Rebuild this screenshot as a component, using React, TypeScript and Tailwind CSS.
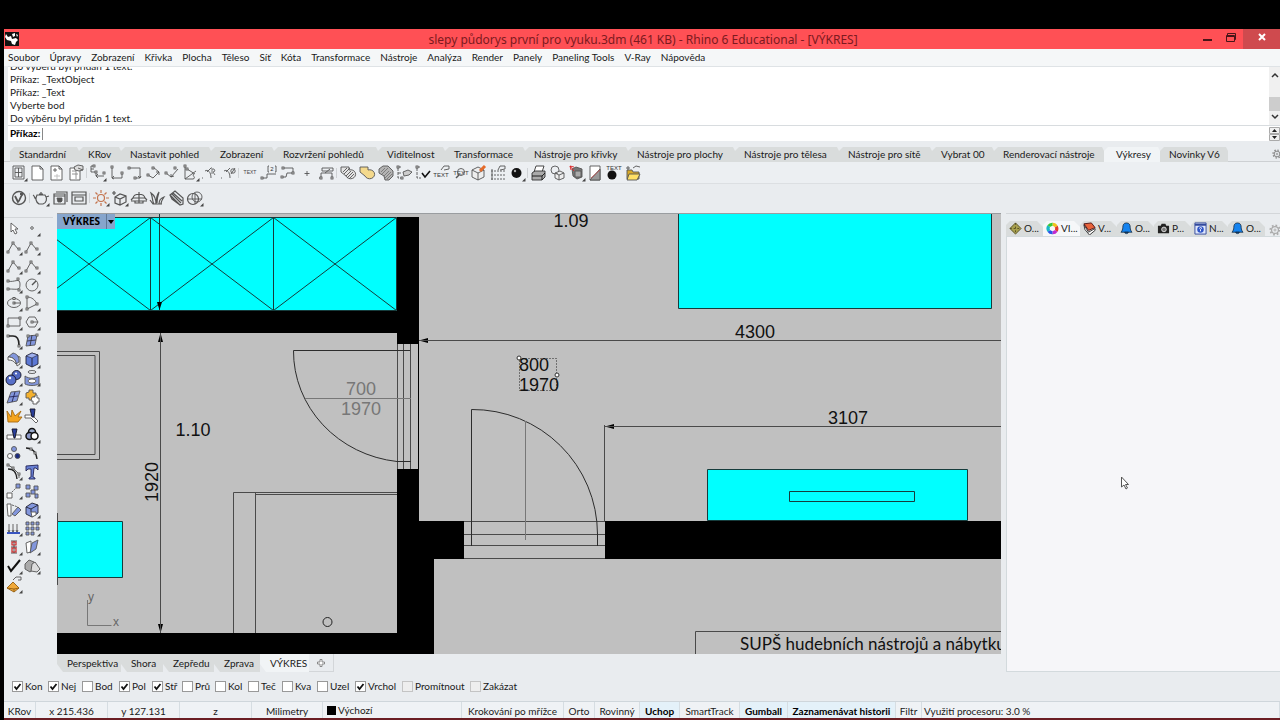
import { ReactNode } from "react";
import clsx from "clsx";

const menu = [
  "Soubor", "Úpravy", "Zobrazení", "Křivka", "Plocha", "Těleso", "Síť", "Kóta",
  "Transformace", "Nástroje", "Analýza", "Render", "Panely", "Paneling Tools",
  "V-Ray", "Nápověda",
];

const history = [
  "Do výběru byl přidán 1 text.",
  "Příkaz: _TextObject",
  "Příkaz: _Text",
  "Vyberte bod",
  "Do výběru byl přidán 1 text.",
];

const toolTabs = [
  { label: "Standardní", width: "w-[69px]" },
  { label: "KRov", width: "w-[42px]" },
  { label: "Nastavit pohled", width: "w-[90px]" },
  { label: "Zobrazení", width: "w-[63px]" },
  { label: "Rozvržení pohledů", width: "w-[104px]" },
  { label: "Viditelnost", width: "w-[67px]" },
  { label: "Transformace", width: "w-[80px]" },
  { label: "Nástroje pro křivky", width: "w-[103px]" },
  { label: "Nástroje pro plochy", width: "w-[107px]" },
  { label: "Nástroje pro tělesa", width: "w-[104px]" },
  { label: "Nástroje pro sítě", width: "w-[93px]" },
  { label: "Vybrat 00", width: "w-[62px]" },
  { label: "Renderovací nástroje", width: "w-[110px]" },
  { label: "Výkresy", width: "w-[56px]", active: true },
  { label: "Novinky V6", width: "w-[68px]" },
];

const viewTabs = [
  { label: "Perspektiva", width: "w-[64px]" },
  { label: "Shora", width: "w-[42px]" },
  { label: "Zepředu", width: "w-[51px]" },
  { label: "Zprava", width: "w-[46px]" },
  { label: "VÝKRES", width: "w-[49px]", active: true },
];

const snaps = [
  { label: "Kon", width: "w-[36px]", on: true },
  { label: "Nej", width: "w-[34px]", on: true },
  { label: "Bod", width: "w-[37px]" },
  { label: "Pol", width: "w-[33px]", on: true },
  { label: "Stř", width: "w-[30px]", on: true },
  { label: "Prů", width: "w-[33px]" },
  { label: "Kol", width: "w-[33px]" },
  { label: "Teč", width: "w-[34px]" },
  { label: "Kva", width: "w-[35px]" },
  { label: "Uzel", width: "w-[38px]" },
  { label: "Vrchol", width: "w-[47px]", on: true },
  { label: "Promítnout", width: "w-[68px]", off: true },
  { label: "Zakázat", width: "w-[56px]", off: true },
];

const statusCells = [
  { label: "Krokování po mřížce", width: "w-[102px]" },
  { label: "Orto", width: "w-[31px]" },
  { label: "Rovinný", width: "w-[45px]" },
  { label: "Uchop", width: "w-[40px]", on: true },
  { label: "SmartTrack", width: "w-[60px]" },
  { label: "Gumball", width: "w-[48px]", on: true },
  { label: "Zaznamenávat historii", width: "w-[108px]", on: true },
  { label: "Filtr", width: "w-[26px]" },
];

type Tool = { name: string; art: ReactNode; more?: boolean };

// small square control point used by most curve icons
const Pt = ({ x, y }: { x: number; y: number }) => (
  <rect x={x - 1} y={y - 1} width="2" height="2" fill="#fff" stroke="#444" strokeWidth="0.8" />
);

const hatch = "M4 8l4-4M5 10l6-6M7 12l5-5M8 14l6-6M10 15l5-5";
const blob = "M2 3h8v3a5 4.500 0 1 1-3 6L2 8z";

const dimGroups: { width: string; tools: Tool[] }[] = [
  {
    width: "w-[75px]",
    tools: [
      { name: "Rozvržení", more: true, art: <path d="M3 2h11v13H3zM5 4h7v9H5zM8.500 4v9M5 8.500h7" /> },
      { name: "Nový list", art: <path fill="#fff" d="M3 2h8l3 3v11H3zM11 2v3h3" /> },
      { name: "Kopie listu", art: <><path fill="#fff" d="M3 2h8l3 3v11H3zM11 2v3h3" /><path d="M5 6h4M7 4v4" /><path stroke="#bbb" d="M9 10v5M6 12h6" /></> },
      { name: "Vlastnosti listu", art: <><path fill="#fff" d="M3 4h10v12H3z" /><path d="M5 7h4M5 10h6M9 7v8" stroke="#888" /><path fill="#ddd" d="M7 3l4-2 5 1v4l-4 1-4-1z" /><path d="M11 4l5 2" /></> },
    ],
  },
  {
    width: "w-[148px]",
    tools: [
      { name: "Lineární kóta", more: true, art: <><path d="M4 2H2v6h5M2 5h3M7 8v4h8M7 12l2-2M7 12l2 2" /><Pt x={5} y={2} /><Pt x={7} y={8} /><Pt x={15} y={9} /></> },
      { name: "Vodorovná kóta", art: <><path d="M4 3v11h10V9M6 12l-2 2 2 1" /><Pt x={4} y={3} /><Pt x={14} y={9} /></> },
      { name: "Svislá kóta", art: <><path d="M3 4h11v10h-4M12 12l2 2 1-2" /><Pt x={3} y={4} /><Pt x={9} y={14} /></> },
      { name: "Zarovnaná kóta", art: <><path d="M8 3l6 5-6 6-5-3M14 8h-3M14 8v3" /><Pt x={3} y={11} /><Pt x={8} y={4} /></> },
      { name: "Otočená kóta", art: <><path d="M3 9l5 4 7-8M8 13l3-1M8 13V10" /><Pt x={3} y={9} /><Pt x={12} y={4} /></> },
      { name: "Úhlová kóta", more: true, art: <><path d="M3 2v13l11-8M3 15h8M5 5l8 5M12 10c-3 1 3 4-1 5" /><Pt x={3} y={2} /><Pt x={5} y={5} /></> },
      { name: "Poloměr", art: <><path d="M2 14h1M5 7c3-2 6 1 6 7M7 8l4-4h1" /><path d="M12 10V5h2l1 2-2 1 2 3" stroke="#666" /></> },
      { name: "Průměr", art: <><path d="M2 14h1M5 7c3-2 6 1 6 7M7 8l4-4" /><circle cx="14" cy="7" r="2.200" /><path d="M12 10l4-6" /></> },
    ],
  },
  {
    width: "w-[94px]",
    tools: [
      { name: "Text", art: <text x="9" y="10" textAnchor="middle" fontSize="5" fill="#444" stroke="none">TEXT</text> },
      { name: "Odkaz", art: <><path d="M3 14h4v-4h9M9 2H8v6h1M15 2h1v6h-1" /><text x="12" y="7" textAnchor="middle" fontSize="6" fill="#333" stroke="none">2</text><Pt x={2} y={14} /></> },
      { name: "Odkazová čára", art: <><path d="M3 13h4l1-4M4 4h10v5H8" /><Pt x={3} y={13} /><Pt x={4} y={4} /><Pt x={14} y={9} /></> },
      { name: "Bod", art: <path d="M9 7v5M6.500 9.500h5" /> },
      { name: "Staničení", art: <><path d="M2 14h2V9h11v5M5 4h11v3H5zM8 9l5-4" /><Pt x={4} y={14} /><Pt x={15} y={14} /></> },
    ],
  },
  {
    width: "w-[187px]",
    tools: [
      { name: "Šrafa", art: <><path fill="#e4e4e4" d={blob} /><path d={hatch} /></> },
      { name: "Výplň", art: <path fill="#f4d98c" d={blob} /> },
      { name: "Obrys šrafy", art: <><path fill="#b4b4b4" d="M2 5l4-3h5l5 5v5l-4 4H8l-1-4-5-3z" /><path d={hatch} stroke="#777" /></> },
      { name: "Upravit kótu", art: <><path d="M6 3H3v11h4M3 9h4" strokeDasharray="3 1" /><path fill="#ccc" d="M8 8l5-2 4 2-3 3-5 1z" /><Pt x={3} y={3} /><Pt x={7} y={14} /></> },
      { name: "Zkontrolovat", art: <><path d="M6 3H3v11h4" strokeDasharray="3 1" /><path d="M8 9l3 4 5-6" stroke="#111" strokeWidth="1.600" /><Pt x={3} y={3} /></> },
      { name: "Vlastnosti textu", art: <><text x="8" y="13" textAnchor="middle" fontSize="6" fill="#333" stroke="none">TEXT</text><path d="M8 6l3-4h5v3l-5 1" /></> },
      { name: "Najít text", art: <><text x="9" y="11" textAnchor="middle" fontSize="6" fill="#444" stroke="none">TEXT</text><circle cx="9" cy="8" r="3.500" /><path d="M7 11l-3 3" strokeWidth="1.500" /></> },
      { name: "2D výkres", art: <><path fill="#eee" d="M2 6l6-3 6 3v7l-6 3-6-3zM2 6l6 3 6-3M8 9v7" /><path d="M10 7l5-5" stroke="#e56b2a" strokeWidth="3" /></> },
      { name: "Tabulka", art: <><path d="M2 7h14M2 11h14M2 15h14" strokeDasharray="2 1" /><path d="M3 5v11M9 6l2-4h5v3l-5 1" /></> },
      { name: "Materiál", more: true, art: <><circle cx="8.500" cy="9" r="5" fill="#111" stroke="none" /><circle cx="7" cy="7" r="1.200" fill="#aaa" stroke="none" /></> },
    ],
  },
  {
    width: "w-[112px]",
    tools: [
      { name: "Tisk", art: <g stroke="#333"><path fill="#fff" d="M6 2h8l-2 6H4z" /><path fill="#aaa" d="M2 9l3-2h10v6l-3 3H2z" /><path d="M2 12h10l3-3M12 12v4" stroke="#111" /></g> },
      { name: "Make2D", art: <><circle cx="6" cy="6" r="4" /><path fill="#eee" d="M6 9l5-2 4 2v5l-5 2-4-2zM6 9l4 2 5-2M10 11v5" /></> },
      { name: "Řez", more: true, art: <><path fill="#777" d="M4 5l4-2 6 2v8l-5 2-4-3z" /><path fill="#aaa" d="M7 7h6v6H7z" /><path d="M2 2l4 5M2 2l4 1M2 2l1 4" stroke="#d22" /></> },
      { name: "Průhled", art: <><path fill="#fff" d="M4 2h10v14H4z" /><path fill="#999" d="M4 16L14 5v11z" /><path d="M5 14l9-8" stroke="#b55" /></> },
      { name: "Textový bod", art: <><circle cx="7" cy="11" r="4.500" fill="#111" stroke="none" /><text x="9" y="6" textAnchor="middle" fontSize="6" fill="#333" stroke="none">TEXT</text></> },
      { name: "Otevřít šablonu", art: <><path fill="#d9a928" d="M3 6h5l1 2h6v7H3z" /><path fill="#ffe066" d="M5 10h11l-3 6H3z" /><path d="M2 4h4M4 2v4M9 4l3-2 4 1" /></> },
    ],
  },
];

const vrayGroups: { width: string; tools: Tool[] }[] = [
  {
    width: "w-[18px]",
    tools: [{ name: "V-Ray", art: <><circle cx="9" cy="9" r="6.500" strokeWidth="1.400" /><path d="M5 7l3 6c2-1 2-6 5-8M10 5l3 0" strokeWidth="1.800" /></> }],
  },
  {
    width: "w-[56px]",
    tools: [
      { name: "Render", more: true, art: <path d="M5 6h8c3 4 1 8-2 9H7c-3-2-4-5-2-9zM7 5h4M9 3v2M4 10C2 9 3 7 1 6M14 8l3-1" strokeWidth="1.200" /> },
      { name: "Interaktivní render", art: <><path d="M5 3h11v10M3 5h11v10H3zM3 7h11" strokeWidth="1.200" /><path fill="#555" d="M6 9h5v3l-1 1H7z" /></> },
      { name: "Frame buffer", art: <path d="M2 3h14v12H2zM2 6h14M5 8h8v4H5z" strokeWidth="1.200" /> },
    ],
  },
  {
    width: "w-[112px]",
    tools: [
      { name: "Slunce", more: true, art: <g stroke="#c4744e" strokeWidth="1.200"><circle cx="9" cy="9" r="3.500" /><path d="M9 1v3M9 14v3M1 9h3M14 9h3M3.500 3.500l2 2M12.500 12.500l2 2M3.500 14.500l2-2M12.500 5.500l2-2" /></g> },
      { name: "Přidat objekt", more: true, art: <path d="M4 8l5-3 6 2v6l-6 3-5-2zM4 8l5 2 6-3M9 10v6M1 4h4M3 2v4" strokeWidth="1.200" /> },
      { name: "Nekonečná rovina", art: <path d="M3 9c1-5 11-5 12 0zM1 11l2-2M17 11l-2-2M1 12h16M9 3v11M5 12v2h8v-2" strokeWidth="1.200" /> },
      { name: "Srst", art: <path d="M8 15C8 9 6 6 3 4c2 5 1 8 3 11M9 14c0-5 1-8 2-11-3 4-3 7-2 11M11 15c0-4 2-6 5-7-2 3-3 5-3 7M2 11l3 4h9" strokeWidth="1.200" /> },
      { name: "Ořez", art: <path d="M3 6l5-4 8 7v6l-3 1zM3 6l2 4 8 6M5 5l9 9M6 4l9 8" strokeWidth="1.200" /> },
      { name: "Kamera", more: true, art: <><circle cx="7" cy="10" r="5.500" strokeWidth="1.200" /><circle cx="11" cy="8" r="5" /><path d="M2 10h14M9 4v11" /></> },
    ],
  },
];

const blue = "#8296dc";
const poly = <><path d="M3 14l5-9 6 7" /><Pt x={3} y={14} /><Pt x={8} y={5} /><Pt x={14} y={11} /></>;

const sideTools: Tool[] = [
  { name: "Výběr", art: <path fill="#fff" d="M6 4v9l2-2 2 4 2-1-2-4h3z" /> },
  { name: "Bod", more: true, art: <circle cx="9" cy="9" r="1.300" /> },
  { name: "Lomená čára", more: true, art: poly },
  { name: "Úsečka", more: true, art: poly },
  { name: "Křivka", more: true, art: poly },
  { name: "Volná křivka", more: true, art: poly },
  { name: "Řídicí body", more: true, art: <><path d="M3 5c6 2 12-4 12 3s-2 5-12 5" /><Pt x={3} y={5} /><Pt x={13} y={3} /><Pt x={3} y={13} /><Pt x={14} y={14} /></> },
  { name: "Kružnice", more: true, art: <><circle cx="9" cy="9" r="6" /><path d="M9 9l4-4" strokeWidth="1.500" /></> },
  { name: "Elipsa", more: true, art: <><ellipse cx="9" cy="9" rx="6.500" ry="4.500" /><Pt x={9} y={9} /><Pt x={9} y={4.500} /><path d="M9 9h6" /></> },
  { name: "Oblouk", more: true, art: <><path d="M4 3c5 0 8 3 10 7l-10 5z" /><Pt x={4} y={3} /><Pt x={14} y={10} /><Pt x={4} y={15} /></> },
  { name: "Obdélník", more: true, art: <><path d="M3 5h12v8H3z" /><Pt x={3} y={13} /><Pt x={15} y={5} /></> },
  { name: "Mnohoúhelník", more: true, art: <><path d="M6 4h6l3 5-3 5H6L3 9z" /><path d="M9 9h6" /><Pt x={9} y={9} /></> },
  { name: "Zaoblení", more: true, art: <><path d="M3 4h5c4 0 6 3 6 9" strokeWidth="1.600" stroke="#222" /><Pt x={3} y={4} /><Pt x={14} y={14} /></> },
  { name: "Plocha z bodů", more: true, art: <><path fill={blue} d="M5 4l9-1-2 10-9 1z" /><path d="M4 9l9-1M9 3l-2 11" stroke="#334" /><Pt x={5} y={4} /><Pt x={14} y={3} /></> },
  { name: "Vytažení plochy", more: true, art: <><path fill="#eee" d="M10 4l5 2v7l-3 2z" /><path fill={blue} d="M3 6l5-4c4 1 6 3 6 9l-3 2c0-4-3-7-8-7z" /><path fill="#fff" d="M3 6v3c4 0 6 1 8 4 0-4-3-7-8-7z" /></> },
  { name: "Kvádr", more: true, art: <><path fill="#5c78d4" stroke="#223" d="M3 5l6-3 6 2v9l-6 3-6-3z" /><path fill="#9fb0ee" stroke="#223" strokeWidth="0.600" d="M3 5l6-3 6 2-6 3z" /><path d="M9 7v9" stroke="#223" /></> },
  { name: "Sjednocení", more: true, art: <><circle cx="11.500" cy="6" r="4.500" fill="#5068c0" stroke="#112" /><circle cx="6" cy="11" r="5" fill="#5870c8" stroke="#112" /><circle cx="5" cy="9" r="1.200" fill="#fff" stroke="none" /><circle cx="11" cy="4.500" r="1" fill="#fff" stroke="none" /></> },
  { name: "Promítnutí", more: true, art: <><ellipse cx="9" cy="3" rx="4" ry="1.500" /><path fill={blue} d="M2 7c4 3 10 3 14 0v8c-4 2-10 2-14 0z" /><ellipse cx="9" cy="12" rx="4" ry="2" fill="#fff" /></> },
  { name: "Oříznutí plochy", more: true, art: <><path fill={blue} d="M6 4l9-1-3 10-10 2z" /><path d="M4 9l9-1M10 4L7 14" stroke="#225" /></> },
  { name: "Rozložit", art: <><path fill="#f4b12e" d="M3 5l3-1V2h4v3h3v4h-3v3H6v-2H3z" /><path fill="#fff" d="M9 9h3V7h2v3h2v4h-2v2h-4v-3H8z" /></> },
  { name: "Rozbít", art: <path fill="#f4a41e" stroke="#a66a10" d="M3 15L2 4l4 6 1-7 3 6 6-5-3 6h4l-4 5z" /> },
  { name: "Oříznout", art: <><path fill="#fff" d="M2 8h6l3 2 4 4-2 2-5-5H2z" /><path fill="#2a3f9a" stroke="#112" d="M9 10l-2-8h5l-1 8z" /></> },
  { name: "Rozdělit", art: <><path fill="#fff" d="M2 9h14v4H2z" /><path fill="#2a3f9a" stroke="#112" d="M9 12L7 3h5l-2 9z" /></> },
  { name: "Barvy", more: true, art: <g strokeWidth="1.500" stroke="#111"><circle cx="9" cy="6" r="3.500" fill="#9ac" /><circle cx="6.500" cy="10" r="3.500" fill="#8c98c8" /><circle cx="11.500" cy="10" r="3.500" fill="#fff" /></g> },
  { name: "Skupina", art: <><circle cx="9" cy="5" r="2.500" fill={blue} /><circle cx="5" cy="12" r="2.500" fill="#fff" /><circle cx="12.500" cy="12" r="2.500" fill="#1d2c80" /></> },
  { name: "Editační body", art: <><path d="M3 4c7 0 10 4 11 11" stroke="#222" strokeWidth="1.400" /><Pt x={8} y={5} /><Pt x={12} y={9} /></> },
  { name: "Upravit body", more: true, art: <><path d="M3 6c6 0 8 3 9 10" stroke="#222" strokeWidth="1.400" /><path d="M3 2l5 3 6 6v4" /><Pt x={3} y={2} /><Pt x={8} y={5} /><Pt x={14} y={11} /></> },
  { name: "Textový objekt", art: <path fill="#6880d4" stroke="#225" d="M3 3l12-1v5l-2-2h-2l-1 9 2 1v1H6v-1l2-1V6L5 6 3 8z" /> },
  { name: "Přesunout", more: true, art: <><path fill="#fff" d="M2 11h5v5H2z" /><path fill={blue} d="M11 2h4v4h-4z" /><path d="M7 10l4-4" strokeDasharray="2 1" /></> },
  { name: "Kopírovat", art: <path fill={blue} d="M3 3h4v4H3zM11 4h4v4h-4zM8 8h4v4H8zM3 11h4v4H3zM12 12h3v4h-3z" /> },
  { name: "Otočit", art: <><path fill="#fff" d="M2 3h4v12H3z" /><path fill={blue} d="M7 13l6-7 3 3-6 6z" /><path d="M7 4l6 2" strokeDasharray="2 1" /></> },
  { name: "Zrcadlit", more: true, art: <><path fill={blue} stroke="#223" d="M3 6l6-4 6 2v8l-6 4-6-3z" /><path d="M3 6l5 2 7-4M8 8v3" stroke="#223" /><path fill="#fff" d="M8 11h5v3l-4 2z" /></> },
  { name: "Zarovnat", more: true, art: <><path d="M2 14h13" stroke="#3854c0" strokeWidth="2" /><path d="M4 5v8M8 5v8M12 5v8M3 11l1 2 1-2M7 11l1 2 1-2M11 11l1 2 1-2" stroke="#555" /></> },
  { name: "Pole", more: true, art: <path fill={blue} d="M3 3h3v3H3zM8 3h3v3H8zM13 3h3v3h-3zM3 8h3v3H3zM8 8h3v3H8zM13 8h3v3h-3zM3 13h3v3H3zM8 13h3v3H8z" /> },
  { name: "Staničení", more: true, art: <><path d="M9 3v12M6 3h6M6 9h6M6 15h6" stroke="#444" /><path d="M7 4h4v3H7zM7 10h4v4H7z" stroke="#c22" strokeWidth="1.200" /></> },
  { name: "Ohnout", more: true, art: <><path fill="#fff" d="M3 5l5-2v11l-4 1z" /><path fill={blue} d="M9 5l6-3-2 9-6 4z" /></> },
  { name: "Kontrola", more: true, art: <path d="M3 9l3 5 9-11" stroke="#111" strokeWidth="2" /> },
  { name: "Analýza", more: true, art: <><path fill="#aaa" d="M2 7l4-4 5 2v7l-4 3-5-3z" /><path fill="#ddd" d="M8 14l1-7 3-2 5 7-3 3z" /></> },
  { name: "Pracovní rovina", more: true, art: <><path fill="#f0a93a" stroke="#945e10" d="M2 12l6-6 6 6-5 4z" /><path d="M2 12l7 1 5-1M9 13v3" stroke="#945e10" /><path d="M8 4l3-3h5v3h-3" /></> },
];

function ToolButton({ tool }: { tool: Tool }) {
  return (
    <button type="button" aria-label={tool.name} className="flex min-w-0 flex-1 items-center justify-center">
      <svg viewBox="0 0 18 18" className="size-[18px] shrink-0" fill="none" stroke="#555" strokeWidth="0.900" fontFamily="Liberation Sans">
        {tool.art}
        {tool.more && <path d="M17.500 14v3.500H14z" fill="#444" stroke="none" />}
      </svg>
    </button>
  );
}

function Toolbar({ groups }: { groups: { width: string; tools: Tool[] }[] }) {
  return (
    <div className="flex px-1.5">
      {groups.map((g, i) => (
        <div key={i} className="flex">
          {i > 0 && <span className="mx-px my-1 w-0.5 border-l border-[#cfd2d5]" />}
          <div className={clsx("flex", g.width)}>
            {g.tools.map((t) => <ToolButton key={t.name} tool={t} />)}
          </div>
        </div>
      ))}
    </div>
  );
}

const bell = <path fill="#1583ef" stroke="#123" strokeWidth="0.800" d="M7 1c3 0 4 2 4 5 0 2 1 4 2 5H1c1-1 2-3 2-5 0-3 1-5 4-5zM5 11h4c0 2-4 2-4 0z" />;

const panelTabs: { label: string; active?: boolean; art: ReactNode }[] = [
  { label: "O...", art: <><path fill="#a8a04e" stroke="#554f22" d="M7 1l6 6-6 6-6-6z" /><path d="M7 1v12M1 7h12" stroke="#554f22" strokeDasharray="2 2" /></> },
  {
    label: "VI...",
    active: true,
    art: (
      <g strokeWidth="3.500" fill="none">
        <path d="M7 2.500A4.500 4.500 0 0 1 11 5" stroke="#f2c21c" />
        <path d="M11 5a4.500 4.500 0 0 1 0 4.500" stroke="#e23b2c" />
        <path d="M11 9.500a4.500 4.500 0 0 1-4 2" stroke="#c22ad0" />
        <path d="M7 11.500a4.500 4.500 0 0 1-4-2" stroke="#2b55e8" />
        <path d="M3 9.500a4.500 4.500 0 0 1 0-5" stroke="#18b8c8" />
        <path d="M3 4.500a4.500 4.500 0 0 1 4-2" stroke="#3cc534" />
      </g>
    ),
  },
  { label: "V...", art: <><path fill="#fff" stroke="#333" d="M1 3l5 8 7-4v2l-6 5-5-6z" /><path fill="#e7643c" stroke="#511" d="M1 2l8-1 4 5-7 3z" /></> },
  { label: "O...", art: bell },
  { label: "P...", art: <><path fill="#222" d="M1 4h3l1-2h4l1 2h3v8H1z" /><circle cx="7.500" cy="8" r="2.500" fill="#777" stroke="#ddd" /></> },
  { label: "N...", art: <><path fill="#dfe7fb" stroke="#334a9c" d="M1 1h12v12H1z" /><path d="M1 3h12" stroke="#334a9c" strokeWidth="2" /><circle cx="7" cy="8" r="3.500" fill="#2f55c8" /><path d="M6 7c0-2 3-1 2 0l-1 1v2" stroke="#fff" fill="none" /></> },
  { label: "O...", art: bell },
];

function Gear({ className }: { className?: string }) {
  return (
    <svg viewBox="0 0 14 14" className={clsx("shrink-0", className)} fill="none" stroke="currentColor">
      <circle cx="7" cy="7" r="4" strokeWidth="1.400" />
      <circle cx="7" cy="7" r="5.500" strokeWidth="2" strokeDasharray="2 2.300" />
      <circle cx="7" cy="7" r="1.200" />
    </svg>
  );
}

// Floor plan, in the page coordinates of the drawing sheet
function FloorPlan() {
  return (
    <svg className="block h-full w-full" fontFamily="Liberation Sans" fontSize="18" role="img" aria-label="Půdorys">
      <g transform="translate(-57 -213)">
        <g stroke="#163c3c" fill="#00ffff">
          <path d="M27.500 217.500h369v93h-369z" />
          <path d="M678.500 200.500h313v108h-313zM707.500 469.500h260v51h-260zM40.500 521.500h82v56h-82z" />
          <path fill="none" d="M27.500 217.500l123 93 123-93 123 93M27.500 310.500l123-93 123 93 123-93M150.500 217v93M273.500 217v93M159.500 213v97M789.500 491.500h125v10h-125z" />
        </g>
        <g fill="#000">
          <path d="M57 311h340v-94h22v127h-22v-11H57z" />
          <path d="M397 469h22v52h45v38h-30v96H57v-22h340z" />
          <path d="M605 521h2000v38H605z" />
          <path d="M418 344h1v125h-1z" />
          <path d="M159.500 310l-2.500-8h5zM160.500 333l-2.500 9h5zM160.500 633l-2.500-9h5zM419 340.500l9-2.500v5zM605 426.500l9-2.500v5z" />
        </g>
        <g fill="none" stroke="#4a4a4a">
          <path d="M57 351.500h42.500v108H57M57 355.500h38v99H57M57.500 513v72" />
          <path d="M160.500 333v300M233.500 633V492.500H397M255.500 492v141M256 494.500h141" />
          <path d="M397.500 344v125M403.500 344v125M410.500 344v125" />
          <path d="M410 350.500H293.500A117 111 0 0 0 397 461.500h14" stroke="#2c2c2c" />
          <path d="M305 398.500h106" stroke="#777" />
          <path d="M419 340.500h2000M605 426.500h2000M604.500 425v96" />
          <path d="M464 521.500h141M464 534.500h141M464 545.500h141M464 558.500h141" />
          <path d="M471.500 546V409.500A125 125 0 0 1 597.500 534v12" stroke="#2c2c2c" />
          <path d="M525.500 421v119" stroke="#777" />
          <path d="M695.500 655v-23.500h2000" />
          <circle cx="327.500" cy="622" r="4.500" stroke="#222" />
          <path d="M87.500 600v25.500h24" stroke="#777" />
          <path d="M519.500 358.500h37v32h-37z" strokeDasharray="1 2" stroke="#222" />
        </g>
        <g fill="#fff" stroke="#333">
          <circle cx="519" cy="358" r="2" />
          <circle cx="557" cy="375" r="2" />
        </g>
        <g textAnchor="middle" fill="#111">
          <text x="571" y="227">1.09</text>
          <text x="193" y="436">1.10</text>
          <text x="755" y="338">4300</text>
          <text x="848" y="424">3107</text>
          <text x="534" y="371">800</text>
          <text x="539" y="391">1970</text>
          <text x="361" y="395" fill="#777">700</text>
          <text x="361" y="415" fill="#777">1970</text>
          <text transform="translate(158 482) rotate(-90)">1920</text>
        </g>
        <g fill="#666" fontSize="12">
          <text x="88" y="601">y</text>
          <text x="113" y="626">x</text>
        </g>
        <text x="740" y="650" fontFamily="Lato" fontSize="17" fill="#111">SUPŠ hudebních nástrojů a nábytku</text>
      </g>
    </svg>
  );
}

export default function App() {
  return (
    <div className="flex min-h-screen flex-col bg-black pt-[29px] font-['Lato',sans-serif] text-[10px] text-[#1a1a1a]">
      <div className="ml-1 flex flex-1 flex-col bg-[#e9ecef]">
        <header className="flex h-5 items-center bg-[#ff5055] pl-px">
          <svg viewBox="0 0 14 14" className="size-[14px] shrink-0">
            <path d="M0 0h14v14H0z" fill="#111" />
            <path d="M1 2l2 3 3-1 1 3 4-1 2 2-2 2-1 3-3-1-1-3-4-1-2-3zM7 2l3-1v3l-2 1zM11 2l2 1-1 2z" fill="#fff" />
          </svg>
          <h1 className="flex-1 pl-[72px] pt-0.5 text-center font-['Noto_Sans',sans-serif] text-[12px] leading-4 text-[#7c1a20]">
            slepy půdorys první pro vyuku.3dm (461 KB) - Rhino 6 Educational - [VÝKRES]
          </h1>
          <div className="flex h-full">
            <button type="button" aria-label="Minimalizovat" className="flex w-6 items-end justify-center pb-2">
              <span className="h-0.5 w-[9px] bg-[#4a1518]" />
            </button>
            <button type="button" aria-label="Obnovit" className="flex w-6 justify-center pt-1">
              <svg viewBox="0 0 10 10" className="size-[10px]" fill="none" stroke="#4a1518">
                <path d="M1.500 2V.500h8v6H8.500M.500 2.500h8v6h-8zM.500 3.500h8" />
              </svg>
            </button>
            <button type="button" aria-label="Zavřít" className="flex w-[37px] items-center justify-center bg-[#cf4a4e] pb-1">
              <svg viewBox="0 0 8 8" className="size-2" stroke="#fff" strokeWidth="2">
                <path d="M1 1l6 6M7 1L1 7" />
              </svg>
            </button>
          </div>
        </header>

        <nav className="flex h-[17px] items-center gap-[10px] bg-[#f5f7f8] pl-1 whitespace-nowrap">
          {menu.map((item) => (
            <button key={item} type="button">{item}</button>
          ))}
        </nav>

        <section className="ml-1 bg-white">
          <div className="flex h-[59px] border-t border-[#dfe3e6]">
            <div className="flex flex-1 flex-col justify-end overflow-hidden pl-0.5 leading-[13px]">
              {history.map((line, i) => <p key={i} className="shrink-0">{line}</p>)}
            </div>
            <div className="flex w-[11px] flex-col items-center justify-between bg-[#f0f0f0]">
              <svg viewBox="0 0 8 8" className="mt-1 size-2" fill="none" stroke="#333" strokeWidth="1.500"><path d="M1 6l3-3 3 3" /></svg>
              <span className="mt-4 h-[14px] w-full bg-[#cdcdcd]" />
              <svg viewBox="0 0 8 8" className="mb-1 size-2" fill="none" stroke="#333" strokeWidth="1.500"><path d="M1 2l3 3 3-3" /></svg>
            </div>
          </div>
          <div className="flex h-4 items-center border-t border-[#d8dcdf]">
            <label htmlFor="prikaz" className="pl-0.5 font-bold text-black">Příkaz:</label>
            <span className="ml-0.5 h-3 w-px bg-[#888]" />
            <input id="prikaz" className="h-3 min-w-0 flex-1 outline-none" />
            <svg viewBox="0 0 11 14" className="h-[14px] w-[11px]" fill="#222">
              <path d="M.500.500h10v6H.500zM.500 7.500h10v6H.500z" fill="#f0f0f0" stroke="#aaa" />
              <path d="M3 5l2.500-3L8 5zM3 9l2.500 3L8 9z" />
            </svg>
          </div>
        </section>

        <div className="mt-1.5 flex h-[15px] items-stretch border-b border-[#cdd0d3] pl-1.5">
          {toolTabs.map((t) => (
            <button
              key={t.label}
              type="button"
              className={clsx(
                "-mb-px flex shrink-0 items-center whitespace-nowrap [clip-path:polygon(4px_0,calc(100%-2px)_0,100%_4px,100%_100%,0_100%,0_4px)]",
                t.width,
                t.active ? "bg-[#f1f4f6] pl-3" : "bg-[#d9dcdc] pl-[9px]",
              )}
            >
              {t.label}
            </button>
          ))}
          <Gear className="-mr-0.5 ml-auto size-[10px] self-center text-[#888]" />
        </div>

        <div className="flex h-[22px] items-center border-b border-[#dcdfe2] bg-[#eceff2]">
          <Toolbar groups={dimGroups} />
        </div>
        <div className="flex h-[29px] items-center pb-0.5">
          <Toolbar groups={vrayGroups} />
        </div>

        <main className="flex flex-1">
          <aside className="flex w-[53px] shrink-0 flex-col pt-1">
            <div className="mr-1 border-t border-[#d3d6d9]" />
            <div className="mt-px ml-px grid h-[375px] w-[36px] auto-rows-fr grid-cols-2">
              {sideTools.map((t) => <ToolButton key={t.name} tool={t} />)}
            </div>
          </aside>

          <section className="flex min-w-0 flex-1 flex-col">
            <div className="relative min-h-[440px] flex-1 overflow-hidden border-t border-[#9a9da0] bg-[#c0c0c0]">
              <div className="absolute inset-0 -top-px">
                <FloorPlan />
              </div>
              <div className="absolute top-0 left-0 flex h-[15px] items-center bg-[#86a5cc] font-['Noto_Sans',sans-serif] font-bold text-black">
                <span className="w-[49px] pl-1.5">VÝKRES</span>
                <button type="button" aria-label="Nabídka pohledu" className="flex h-full w-[9px] items-center justify-center border-l border-[#5f7896]">
                  <svg viewBox="0 0 6 4" className="h-1 w-1.5"><path d="M0 0h6L3 4z" /></svg>
                </button>
              </div>
            </div>
            <div className="flex h-[18px] items-stretch">
              {viewTabs.map((t) => (
                <button
                  key={t.label}
                  type="button"
                  className={clsx(
                    "flex shrink-0 items-center whitespace-nowrap pt-px pl-[10px] [clip-path:polygon(0_0,100%_0,100%_100%,6px_100%,0_10px)]",
                    t.width,
                    t.active ? "bg-[#f1f4f6]" : "bg-[#d9dcdc]",
                  )}
                >
                  {t.label}
                </button>
              ))}
              <button type="button" aria-label="Nový pohled" className="flex w-[25px] items-center justify-center border-r border-b border-[#d3d6d9] pt-px text-[#888]">
                <svg viewBox="0 0 8 8" className="size-2" fill="#fff" stroke="currentColor"><path d="M3 .500h2V3h2.500v2H5v2.500H3V5H.500V3H3z" /></svg>
              </button>
            </div>
          </section>

          <aside className="ml-[5px] flex w-[274px] shrink-0 flex-col overflow-hidden border-t border-[#d3d6d9]">
            <div className="flex h-[22px] items-end">
              {panelTabs.map((t, i) => (
                <button
                  key={i}
                  type="button"
                  className={clsx(
                    "flex h-[15px] w-[37px] shrink-0 items-center gap-0.5 overflow-hidden pl-[3px] [clip-path:polygon(4px_0,calc(100%-6px)_0,100%_6px,100%_100%,0_100%,0_4px)]",
                    t.active ? "bg-[#f6f7f9]" : "bg-[#d9dcdc]",
                  )}
                >
                  <svg viewBox="0 0 14 14" className="size-[13px] shrink-0">{t.art}</svg>
                  {t.label}
                </button>
              ))}
              <Gear className="ml-1 size-3 text-[#aaa]" />
            </div>
            <div className="flex-1 border border-r-0 border-[#d3dadd] bg-[#f6f6f9]" />
          </aside>
        </main>

        <div className="flex h-[29px] items-center pl-2">
          {snaps.map((s) => (
            <label key={s.label} className={clsx("flex shrink-0 items-center gap-0.5 whitespace-nowrap", s.width)}>
              <input
                type="checkbox"
                defaultChecked={s.on}
                className={clsx("peer size-[11px] shrink-0 appearance-none border", s.off ? "border-[#c4c4c4] bg-[#eee]" : "border-[#999] bg-white")}
              />
              <svg viewBox="0 0 11 11" className="-ml-[13px] hidden size-[11px] shrink-0 peer-checked:block" fill="none" stroke="#111" strokeWidth="1.800">
                <path d="M2.500 5.500l2 2.500 4-5" />
              </svg>
              {s.label}
            </label>
          ))}
        </div>

        <footer className="flex h-[17px] border-t border-[#cfd6db] bg-[#eff2f5] text-center leading-[18px] whitespace-nowrap *:border-r *:border-[#d6dde2]">
          <span className="w-8 shrink-0">KRov</span>
          <span className="w-[72px] shrink-0">x 215.436</span>
          <span className="w-[72px] shrink-0">y 127.131</span>
          <span className="w-[72px] shrink-0">z</span>
          <span className="w-[71px] shrink-0">Milimetry</span>
          <span className="flex w-[139px] shrink-0 items-center gap-0.5 pl-1">
            <i className="size-[9px] bg-black" />
            Výchozí
          </span>
          {statusCells.map((c) => (
            <button key={c.label} type="button" className={clsx("shrink-0", c.width, c.on && "bg-[#e4f1f9] font-bold text-black")}>
              {c.label}
            </button>
          ))}
          <span className="min-w-0 flex-1 pl-0.5 text-left">Využití procesoru: 3.0 %</span>
        </footer>
        <div className="h-0.5 bg-[#6b1e24]" />
      </div>

      <svg viewBox="0 0 10 14" className="absolute top-[476px] left-[1120px] h-[14px] w-[10px]">
        <path d="M1.500 1v10l2.500-2 2 4 1.500-1-2-3.500H8.500z" fill="#fff" stroke="#555" />
      </svg>
    </div>
  );
}
